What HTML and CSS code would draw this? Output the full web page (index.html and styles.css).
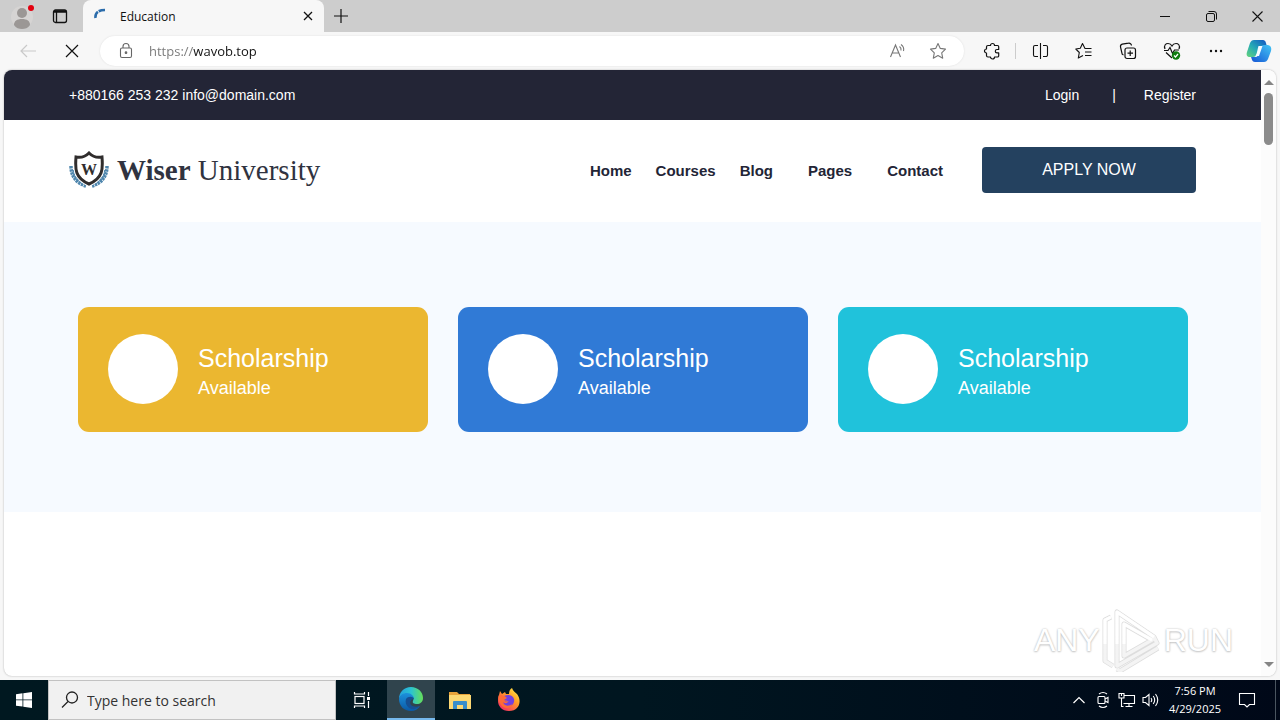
FILE: index.html
```html
<!DOCTYPE html>
<html lang="en">
<head>
<meta charset="utf-8">
<title>Education</title>
<link rel="stylesheet" href="styles.css">
</head>
<body>
<div class="tabbar">
  <button class="profile" aria-label="Profile"><svg width="24" height="28" viewBox="0 0 24 28"><circle cx="12" cy="15" r="11" fill="#d6d4d3"/><circle cx="12" cy="11" r="5" fill="#9b9795"/><path d="M4 23c0-4 3-6 8-6s8 2 8 6c-2 3-5 4-8 4s-6-1-8-4z" fill="#9b9795"/><circle cx="21" cy="6" r="3" fill="#e3000f"/></svg></button>
  <button class="workspaces" aria-label="Tab actions"><svg width="16" height="16" viewBox="0 0 16 16" fill="none" stroke="#111" stroke-width="1.3"><rect x="1.500" y="2" width="13" height="12.500" rx="2"/><path d="M2 3.500h12" stroke-width="2.500"/><path d="M4.500 4v10"/></svg></button>
  <div class="tab">
    <svg width="16" height="16" viewBox="0 0 16 16" fill="none"><path d="M1.500 10C1 5 4 2 11 2" stroke="#2b6cab" stroke-width="2.600" stroke-dasharray="7 1"/></svg>
    <span class="tab-title">Education</span>
    <button class="tab-close" aria-label="Close tab"><svg width="10" height="10" viewBox="0 0 10 10" stroke="#111" stroke-width="1.3"><path d="M1 1l8 8M9 1l-8 8"/></svg></button>
  </div>
  <button class="new-tab" aria-label="New tab"><svg width="14" height="14" viewBox="0 0 14 14" stroke="#111" stroke-width="1.2"><path d="M7 0v14M0 7h14"/></svg></button>
  <div class="window-buttons">
    <button aria-label="Minimize"><svg width="10" height="10" viewBox="0 0 10 10" stroke="#111"><path d="M0 5.5h10"/></svg></button>
    <button aria-label="Restore"><svg width="11" height="11" viewBox="0 0 11 11" fill="none" stroke="#111"><rect x=".5" y="2.5" width="8" height="8" rx="1.5"/><path d="M2.5.5H8A2.500 2.500 0 0 1 10.500 3V8.500"/></svg></button>
    <button aria-label="Close"><svg width="11" height="11" viewBox="0 0 11 11" stroke="#111" stroke-width="1.100"><path d="M.5.5l10 10M10.500.5l-10 10"/></svg></button>
  </div>
</div>
<div class="toolbar">
  <button class="tool" aria-label="Back"><svg width="18" height="16" viewBox="0 0 18 16" fill="none" stroke="#c9c9c9" stroke-width="1.200"><path d="M17 8H2M8 2L2 8l6 6"/></svg></button>
  <button class="tool" aria-label="Stop"><svg width="14" height="14" viewBox="0 0 14 14" stroke="#111" stroke-width="1.200"><path d="M1 1l12 12M13 1L1 13"/></svg></button>
  <div class="address">
    <svg width="14" height="18" viewBox="0 0 14 18" fill="none" stroke="#666" stroke-width="1.100"><rect x="1.500" y="6" width="11" height="9.500" rx="1.500"/><path d="M4 6V4.500a3 3 0 0 1 6 0V6"/><circle cx="7" cy="10.700" r=".8" fill="#666"/></svg>
    <input class="url" type="text" value="https://wavob.top" aria-label="Address">
    <button class="in-bar" aria-label="Read aloud"><svg width="18" height="16" viewBox="0 0 18 16" fill="none" stroke="#777" stroke-width="1.100"><path d="M1.500 14L6.500 2l5 12M3.300 10h6.500M10.500 3.500q2 1.500 1.500 4M12 1.500q3.500 2.500 2.500 6.500"/></svg></button>
    <button class="in-bar" aria-label="Add to favorites"><svg width="18" height="18" viewBox="0 0 18 18" fill="none" stroke="#777" stroke-width="1.100" stroke-linejoin="round"><path d="M9 1.500l2.300 4.900 5.200.7-3.800 3.700 1 5.400L9 13.600l-4.700 2.600 1-5.400L1.500 7.100l5.200-.7z"/></svg></button>
  </div>
  <button class="tool" aria-label="Extensions"><svg width="18" height="18" viewBox="0 0 18 18" fill="none" stroke="#111" stroke-width="1.200" stroke-linejoin="round"><path d="M5 3.500H7.500a2 2 0 0 1 4 0H14.500A1.200 1.200 0 0 1 15.700 4.700V7.500H14a1.700 1.700 0 0 0 0 3.400H15.700V13.800A1.200 1.200 0 0 1 14.500 15H11.500a2 2 0 0 1-4 0H5a1.500 1.500 0 0 1-1.500-1.500V11a2 2 0 0 1 0-4V5A1.500 1.500 0 0 1 5 3.500z"/></svg></button>
  <span class="divider"></span>
  <button class="tool" aria-label="Split screen"><svg width="17" height="16" viewBox="0 0 17 16" fill="none" stroke="#111" stroke-width="1.100"><path d="M8.500 0v16M6 2.500H3A1.500 1.500 0 0 0 1.500 4v8A1.500 1.500 0 0 0 3 13.500H6M11 2.500h3A1.500 1.500 0 0 1 15.500 4v8a1.500 1.500 0 0 1-1.500 1.500H11"/></svg></button>
  <button class="tool" aria-label="Favorites"><svg width="18" height="18" viewBox="0 0 18 18" fill="none" stroke="#111" stroke-width="1.100" stroke-linejoin="round"><path d="M16.500 6.500H10L7.500 1.500 5.300 6.200.8 7l3.500 3.500-1 5.500L8 13.500M10 10h6.500M10 13.500h6.500"/></svg></button>
  <button class="tool" aria-label="Collections"><svg width="18" height="18" viewBox="0 0 18 18" fill="none" stroke="#111" stroke-width="1.200"><rect x="6" y="6" width="10.500" height="10.500" rx="2"/><path d="M11.200 8.500v5.500M8.500 11.200h5.500M4.500 13A2.500 2.500 0 0 1 2.800 10.500L1.500 5A2.500 2.500 0 0 1 3.300 2.200L9.500 1.200A2.500 2.500 0 0 1 12.500 3.500"/></svg></button>
  <button class="tool" aria-label="Browser essentials"><svg width="18" height="18" viewBox="0 0 18 18" fill="none" stroke="#111" stroke-width="1.200"><path d="M2 7C.5 3 3 1.500 5 1.500S8.500 3 9 4c.5-1 2-2.500 4-2.500S17.500 3 16 7M3 10.500l6 5.500M1 8.500h4l2-3 2.500 6 2-3.500H16"/><circle cx="13" cy="13.500" r="4.200" fill="#107c10" stroke="none"/><path d="M11 13.500l1.500 1.500 2.500-3" stroke="#fff"/></svg></button>
  <button class="tool" aria-label="Settings and more"><svg width="14" height="4" viewBox="0 0 14 4" fill="#111"><circle cx="2" cy="2" r="1.200"/><circle cx="7" cy="2" r="1.200"/><circle cx="12" cy="2" r="1.200"/></svg></button>
  <button class="tool copilot" aria-label="Copilot"><svg width="26" height="24" viewBox="0 0 26 24"><defs><linearGradient id="ca" x1="0" y1="1" x2="1" y2="0"><stop offset="0" stop-color="#65d47b"/><stop offset=".45" stop-color="#25aab5"/><stop offset="1" stop-color="#1252c4"/></linearGradient><linearGradient id="cb" x1="0" y1="1" x2="1" y2="0"><stop offset="0" stop-color="#1555d4"/><stop offset="1" stop-color="#43c5f5"/></linearGradient></defs><path d="M8 1h9c3 0 3 4 4 6h-5c-2 0-3 2-4 5l-1 3c-1 2-2 3-4 3H4c-3 0-4-2-3-5L4 4c1-2 2-3 4-3z" fill="url(#ca)"/><path d="M18 6h3c3 0 5 2 4 6l-3 8c-1 2-2 3-4 3H9c-3 0-3-3-4-5h4c3 0 3-2 4-5l1-4c1-2 2-3 4-3z" fill="url(#cb)"/><path d="M12.500 7h4l-3.500 10H9.500c1.500-2 2-7 3-10z" fill="#f4fbff"/></svg></button>
</div>
<div class="frame">
  <main class="site">
    <div class="topline">
      <span>+880166 253 232 info@domain.com</span>
      <div class="account"><a href="#">Login</a><span>|</span><a href="#">Register</a></div>
    </div>
    <header class="header">
      <a class="brand" href="#">
        <svg width="40" height="38" viewBox="0 0 40 38" fill="none"><g stroke="#4f86ad" stroke-width="3.500" stroke-dasharray="2.400 .7"><path d="M2 15c0 10 5 17 15 20M38 15c0 10-5 17-15 20"/><path d="M5 19c0 7 4 11 10 14M35 19c0 7-4 11-10 14" stroke-width="3"/></g><path d="M20 2c4 4 8 5 13 4 1 12 1 21-13 27C6 27 6 18 7 6c5 1 9 0 13-4z" stroke="#fff" stroke-width="5"/><path d="M20 2c4 4 8 5 13 4 1 12 1 21-13 27C6 27 6 18 7 6c5 1 9 0 13-4z" fill="#fff" stroke="#302d2d" stroke-width="3"/><text x="20" y="24" text-anchor="middle" class="crest">W</text></svg>
        <span><b>Wiser</b> University</span>
      </a>
      <nav class="nav"><a href="#">Home</a><a href="#">Courses</a><a class="blog" href="#">Blog</a><a class="pages" href="#">Pages</a><a href="#">Contact</a></nav>
      <button class="apply">APPLY NOW</button>
    </header>
    <section class="cards">
      <article class="card gold"><span class="disc"></span><div><h2>Scholarship</h2><p>Available</p></div></article>
      <article class="card blue"><span class="disc"></span><div><h2>Scholarship</h2><p>Available</p></div></article>
      <article class="card cyan"><span class="disc"></span><div><h2>Scholarship</h2><p>Available</p></div></article>
    </section>
  </main>
  <div class="scroll"><i class="up"></i><i class="thumb"></i><i class="down"></i></div>
  <div class="watermark"><span>ANY</span><svg width="60" height="64" viewBox="0 0 60 64" fill="none" stroke-linejoin="round"><path d="M9 9L3 12v41l8 5M15 4v54l40-23-3-6zM22 16v32l28-16zM15 61l3 2 38-23" stroke="#ddd" stroke-width="5"/><path d="M9 9L3 12v41l8 5M15 4v54l40-23-3-6zM22 16v32l28-16zM15 61l3 2 38-23" stroke="#f4f4f4" stroke-width="3.500"/><path d="M9 9L3 12v24M15 36V4l37 25M22 36V16l28 16" stroke="#fff" stroke-width="3"/></svg><span>RUN</span></div>
</div>
<footer class="taskbar">
  <button class="start" aria-label="Start"><svg width="16" height="16" viewBox="0 0 16 16" fill="#fff"><path d="M0 2.200L6.500 1.300v6.200H0zM7.300 1.200L16 0v7.500H7.300zM0 8.300h6.500v6.300L0 13.700zM7.300 8.300H16V16l-8.700-1.200z"/></svg></button>
  <label class="search"><svg width="18" height="18" viewBox="0 0 18 18" fill="none" stroke="#222" stroke-width="1.300"><circle cx="11" cy="6.500" r="5.500"/><path d="M7 10.500L1 16.500"/></svg><input type="text" placeholder="Type here to search" aria-label="Type here to search"></label>
  <button class="task view" aria-label="Task View"><svg width="18" height="18" viewBox="0 0 18 18" fill="none" stroke="#fff" stroke-width="1.200"><rect x="2" y="5.500" width="9" height="7"/><path d="M1.500 1v2h10V1M1.500 17v-2h10v2M15.500 1v4M15.500 10v7"/><path d="M14 6h3v3h-3z" fill="#fff" stroke="none"/></svg></button>
  <button class="task active" aria-label="Microsoft Edge"><svg width="24" height="24" viewBox="0 0 24 24"><defs><linearGradient id="ea" x1="0" y1="0" x2="1" y2="0"><stop offset="0" stop-color="#249fdc"/><stop offset=".5" stop-color="#2bc3d2"/><stop offset="1" stop-color="#66df58"/></linearGradient><linearGradient id="eb" x1="0" y1="0" x2="0" y2="1"><stop offset="0" stop-color="#1c91dc"/><stop offset="1" stop-color="#0b59a5"/></linearGradient></defs><path d="M0 12C0 5 5 0 12 0s12 5 12 11c0 4-3 6-6 6-3 0-5-1-4-3 2-4-2-7-6-7-4 0-7 2-8 5z" fill="url(#ea)"/><path d="M0 12c1-4 4-6 8-6 4 0 7 3 7 6-2-2-6 0-6 4 0 5 6 6 12 3-2 3-5 5-9 5-7 0-12-5-12-12z" fill="url(#eb)"/><path d="M7 12c2-3 7-3 8 0-3 0-5 3-3 6 2 2 6 2 9 1-4 4-9 4-12 1-2-2-3-5-2-8z" fill="#164f92"/></svg></button>
  <button class="task" aria-label="File Explorer"><svg width="22" height="19" viewBox="0 0 22 19"><path d="M0 1h8l2 2h11v15H0z" fill="#e8a33a"/><path d="M0 4h22v14H0z" fill="#fcd873"/><path d="M4 18v-7q0-1 1-1h12q1 0 1 1v7h-4v-4H8v4z" fill="#398ecb"/></svg></button>
  <button class="task" aria-label="Firefox"><svg width="24" height="24" viewBox="0 0 24 24"><defs><linearGradient id="fa" x1=".9" y1="0" x2=".1" y2="1"><stop offset="0" stop-color="#fff04c"/><stop offset=".4" stop-color="#ff9b25"/><stop offset="1" stop-color="#f4206c"/></linearGradient></defs><path d="M2 7l1-4 2 3 3-2 1 2 3 0c0-3 1-5 3-6 1 3 3 4 5 6 5 6 3 17-8 17C5 23 1 18 1 13c0-3 0-4 1-6z" fill="url(#fa)"/><path d="M7 8c4-2 9-1 10 3 1 5-3 8-7 7-3-1-4-3-4-5l6 1c-2-2-4-1-5-2z" fill="#7140df"/><path d="M2 7c3 0 5 0 8 3l-3 2c1 2 3 2 4 2-2 2-4 1-5 0 0 4 6 5 9 2-1 5-8 5-11 1-2-3-3-6-2-10z" fill="#ff6b35"/></svg></button>
  <div class="tray">
    <button aria-label="Show hidden icons"><svg width="12" height="8" viewBox="0 0 12 8" fill="none" stroke="#fff" stroke-width="1.200"><path d="M.5 7L6 1.500 11.500 7"/></svg></button>
    <button aria-label="Meet Now"><svg width="14" height="18" viewBox="0 0 14 18" fill="none" stroke="#fff" stroke-width="1.100"><rect x="2" y="5.500" width="7" height="7" rx="1"/><path d="M9 8l3-1.500v5L9 10M3 3q4-3 8 0M3 15q4 3 8 0"/></svg></button>
    <button aria-label="Network"><svg width="18" height="16" viewBox="0 0 18 16" fill="none" stroke="#fff" stroke-width="1.100"><path d="M6 3.500h10.500v8H5.500M11 11.500v3M7.500 14.500h7M3.500 6v8.500h2M1 1.500h5V6H1zM3.500 1.500V4"/></svg></button>
    <button aria-label="Volume"><svg width="18" height="16" viewBox="0 0 18 16" fill="none" stroke="#fff" stroke-width="1.100"><path d="M1 5.500h2.500L7 2.500v11L3.500 10.500H1zM9 6q1.500 2 0 4M11.200 4q3 4 0 8M13.500 2q4.500 6 0 12"/></svg></button>
    <button class="clock"><time>7:56 PM</time><time>4/29/2025</time></button>
    <button class="notify" aria-label="Notifications"><svg width="18" height="18" viewBox="0 0 18 18" fill="none" stroke="#fff" stroke-width="1.100"><path d="M1.500 2.500h15v11H11.500L9 16l-2.500-2.500h-5z"/></svg></button>
    <span class="peek"></span>
  </div>
</footer>
</body>
</html>
```
FILE: styles.css
```css
* { box-sizing: border-box; }
body {
  margin: 0;
  height: 100vh;
  display: flex;
  flex-direction: column;
  overflow: hidden;
  background: #f7f7f7;
  font-family: "Liberation Sans", Arial, sans-serif;
  color: #232536;
}
button {
  display: flex;
  align-items: center;
  justify-content: center;
  padding: 0;
  border: 0;
  background: none;
  font: inherit;
  color: inherit;
}
a { color: inherit; text-decoration: none; }
svg { display: block; flex: none; }
.tabbar, .toolbar, .taskbar, .tab, .address, .window-buttons, .tray { display: flex; align-items: center; }
.tabbar {
  flex: 0 0 32px;
  background: #cdcdcd;
  font-family: "Open Sans", "Noto Sans", sans-serif;
  font-size: 12px;
}
.profile { width: 44px; height: 32px; }
.workspaces { width: 32px; height: 32px; }
.tab {
  width: 241px;
  height: 32px;
  margin-left: 7px;
  padding: 0 11px;
  background: #f7f7f7;
  border-radius: 8px 8px 0 0;
  color: #111;
}
.tab-title { flex: 1; margin-left: 10px; }
.new-tab { width: 34px; height: 32px; }
.window-buttons { margin-left: auto; }
.window-buttons button { width: 46px; height: 32px; }
.toolbar { flex: 0 0 38px; padding: 0 0 0 6px; }
.tool { width: 44px; height: 38px; flex: none; }
.copilot { width: 42px; }
.address {
  flex: 1;
  height: 30px;
  margin: 0 6px;
  padding: 0 6px 0 19px;
  border-radius: 15px;
  background: #fff;
  box-shadow: 0 0 2px #ddd;
}
.url {
  flex: 1;
  min-width: 0;
  margin-left: 16px;
  padding: 0;
  border: 0;
  background: none;
  font: 13px "Open Sans", "Noto Sans", sans-serif;
  /* the scheme is dimmed, the host is dark */
  color: transparent;
  background: linear-gradient(90deg, #777 44px, #111 44px);
  background-clip: text;
  -webkit-background-clip: text;
}
.in-bar { width: 40px; height: 30px; }
.divider { width: 1px; height: 16px; margin: 0 2px 0 1px; background: #ccc; }
.frame {
  position: relative;
  flex: 1;
  display: flex;
  min-height: 0;
  margin: 0 4px 4px;
  background: #fff;
  border-radius: 8px;
  box-shadow: 0 0 2px #aaa;
  overflow: hidden;
}
.site { flex: 1; }
.topline {
  display: flex;
  justify-content: space-between;
  align-items: center;
  height: 50px;
  padding: 0 65px;
  background: #232536;
  color: #fff;
  font-size: 14px;
}
.account { display: flex; gap: 33px; }
.account a + span { margin-right: -5px; }
.header {
  display: flex;
  align-items: center;
  padding: 27px 65px 29px;
}
.brand {
  display: flex;
  align-items: center;
  gap: 8px;
  margin-right: auto;
  font: 29px "Liberation Serif", serif;
  color: #303340;
}
.crest { font: bold 16px "Liberation Serif", serif; fill: #302d2d; }
.nav { display: flex; gap: 24px; margin-right: 39px; font-size: 15px; font-weight: bold; }
.blog, .pages { margin-right: 11px; }
.apply {
  width: 214px;
  height: 46px;
  border-radius: 4px;
  background: #24415f;
  color: #fff;
  font-size: 16px;
}
.cards {
  display: grid;
  grid-template-columns: repeat(3, 1fr);
  gap: 30px;
  padding: 85px 73px 80px 74px;
  background: #f6faff;
}
.card {
  display: flex;
  align-items: center;
  gap: 20px;
  height: 125px;
  padding: 0 30px 2px;
  border-radius: 11px;
  color: #fff;
}
.gold { background: #ebb730; }
.blue { background: #307ad6; }
.cyan { background: #20c2db; }
.disc { width: 70px; height: 70px; border-radius: 50%; background: #fff; }
.card h2 { margin: 0; padding-top: 6px; font-size: 25px; font-weight: normal; line-height: 32px; }
.card p { margin: 0; font-size: 18px; line-height: 28px; }
.scroll {
  flex: 0 0 15px;
  display: flex;
  flex-direction: column;
  align-items: center;
  padding: 10px 0 9px;
  background: #fcfcfc;
}
.up, .down { border: 5px solid transparent; }
.up { border-top: 0; border-bottom-color: #858585; }
.down { border-bottom: 0; border-top-color: #858585; margin-top: auto; }
.thumb { width: 9px; height: 52px; margin-top: 8px; border-radius: 5px; background: #8b8b8b; }
.watermark {
  position: absolute;
  right: 43px;
  bottom: 4px;
  display: flex;
  align-items: center;
  gap: 2px;
  font: 32px "Liberation Sans", Arial, sans-serif;
  color: #fff;
  text-shadow: 0 0 2px #bbb, 0 1px 2px #ccc;
}
.taskbar {
  flex: 0 0 40px;
  background: linear-gradient(90deg, #001820, #001620 50%, #000818);
  color: #fff;
  font-family: "Open Sans", "Noto Sans", sans-serif;
}
.start { width: 48px; height: 40px; }
.search {
  display: flex;
  align-items: center;
  width: 288px;
  height: 40px;
  padding-left: 12px;
  gap: 8px;
  background: #f1f1f1;
  border: 1px solid #c2c2c2;
}
.search input {
  flex: 1;
  min-width: 0;
  padding: 0;
  border: 0;
  background: none;
  font: 14px "Open Sans", "Noto Sans", sans-serif;
}
.search input::placeholder { color: #333; }
.task { width: 49px; height: 40px; }
.view { width: 51px; }
.active { width: 48px; background: #30444d; border-bottom: 2px solid #76b9ed; }
.tray { margin-left: auto; height: 40px; }
.tray button { width: 24px; height: 40px; }
.tray .clock { width: 64px; flex-direction: column; font-size: 11px; line-height: 18px; }
.tray .notify { width: 40px; }
.peek { width: 1px; height: 40px; margin: 0 4px 0 8px; background: #4a5560; }
```
